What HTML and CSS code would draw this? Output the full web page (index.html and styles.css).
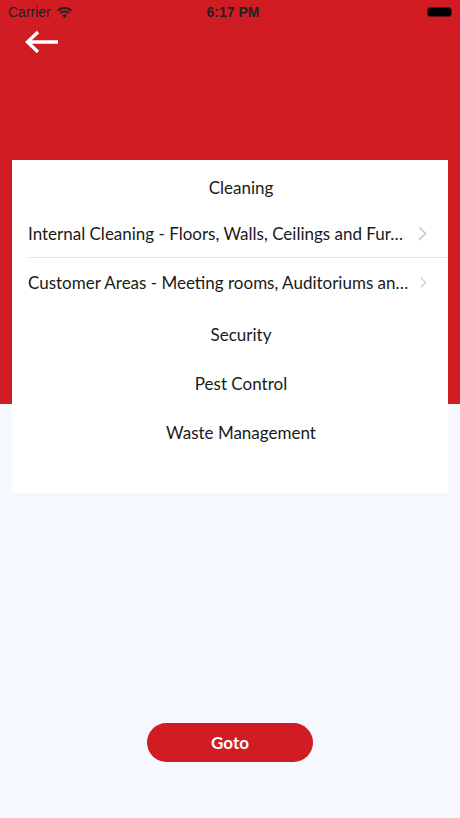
FILE: index.html
```html
<!DOCTYPE html>
<html>
<head>
  <title>Services</title>
  <link rel="stylesheet" href="styles.css">
</head>
<body>
  <div class="top">
    <div class="status-bar">
      <div class="carrier">
        Carrier
        <svg class="wifi" width="15" height="11" viewBox="0 0 15 11">
          <path d="M7.5 0C4.6 0 2 1.1 0 2.9l1.4 1.5C3 2.9 5.2 2 7.5 2s4.5.9 6.1 2.4L15 2.9C13 1.1 10.4 0 7.5 0z" fill="#222"/>
          <path d="M7.5 3.6c-1.9 0-3.6.7-4.9 1.9L4 7c.9-.9 2.1-1.4 3.5-1.4S10.1 6.1 11 7l1.4-1.5C11.1 4.3 9.4 3.6 7.5 3.6z" fill="#222"/>
          <path d="M7.5 7.2c-.9 0-1.8.4-2.4 1L7.5 11l2.4-2.8c-.6-.6-1.5-1-2.4-1z" fill="#222"/>
        </svg>
      </div>
      <div class="time">6:17 PM</div>
      <div class="battery"><span></span></div>
    </div>
    <div class="nav">
      <svg class="back" width="36" height="24" viewBox="0 0 36 24">
        <path d="M34 12H4M14 2L3.5 12 14 22" fill="none" stroke="#fff" stroke-width="3.4"/>
      </svg>
    </div>
  </div>

  <div class="content">
    <div class="card">
      <div class="item first">Cleaning</div>
      <div class="row">
        <span class="row-text">Internal Cleaning - Floors, Walls, Ceilings and Fur…</span>
        <svg class="chevron" width="9" height="15" viewBox="0 0 9 15">
          <path d="M1 1l6.5 6.5L1 14" fill="none" stroke="#c7c7cc" stroke-width="1.6"/>
        </svg>
      </div>
      <div class="row last">
        <span class="row-text">Customer Areas - Meeting rooms, Auditoriums an…</span>
        <svg class="chevron" width="9" height="15" viewBox="0 0 9 15">
          <path d="M1 1l6.5 6.5L1 14" fill="none" stroke="#c7c7cc" stroke-width="1.6"/>
        </svg>
      </div>
      <div class="item spaced">Security</div>
      <div class="item">Pest Control</div>
      <div class="item">Waste Management</div>
    </div>
  </div>

  <div class="footer">
    <button class="goto">Goto</button>
  </div>
</body>
</html>
```

FILE: styles.css
```css
/* page */
body {
  margin: 0;
  padding: 0;
  width: 460px;
  height: 818px;
  overflow: hidden;
  font-family: Lato, sans-serif;
  background-color: #f5f8fe;
  color: #1a1a1a;
  position: relative;
}

.top {
  background-color: #d21c24;
  height: 404px;
}

.status-bar {
  height: 24px;
  display: flex;
  align-items: center;
  justify-content: space-between;
  padding: 0 8px;
  font-family: "Liberation Sans", Arial, sans-serif;
  font-size: 14px;
  color: #222;
}

.carrier {
  display: flex;
  align-items: center;
  gap: 6px;
  width: 120px;
}

.time {
  font-weight: bold;
  font-size: 14px;
  margin-left: 6px;
}

.battery {
  width: 120px;
  display: flex;
  justify-content: flex-end;
}

.battery span {
  width: 23px;
  height: 8px;
  background-color: #000;
  border: 1.5px solid #6a1216;
  border-radius: 3px;
}

.nav {
  height: 36px;
  padding-left: 24px;
  display: flex;
  align-items: center;
}

.back {
  display: block;
}

.content {
  position: absolute;
  top: 160px;
  left: 12px;
  right: 12px;
}

.card {
  background-color: #fff;
  height: 333px;
  padding-top: 4px;
  box-sizing: border-box;
}

.item {
  box-sizing: border-box;
  height: 49px;
  padding-top: 1px;
  line-height: 48px;
  padding-left: 22px;
  text-align: center;
  font-size: 17px;
  white-space: nowrap;
}

.item.first {
  height: 45px;
  padding-top: 2px;
  line-height: 43px;
}

.item.spaced {
  margin-top: 4px;
}

.row {
  height: 48px;
  display: flex;
  align-items: center;
  margin-left: 16px;
  padding-right: 21px;
  border-bottom: 1px solid #e3e3e6;
}

.row.last {
  border-bottom: none;
}

.row-text {
  flex: 1;
  white-space: nowrap;
  font-size: 17px;
  margin-right: 12px;
}

.chevron {
  display: block;
}

.footer {
  position: absolute;
  top: 723px;
  left: 0;
  right: 0;
  display: flex;
  justify-content: center;
}

.goto {
  width: 166px;
  height: 39px;
  border: none;
  border-radius: 20px;
  background-color: #d21c24;
  color: #fff;
  font-family: Lato, sans-serif;
  font-weight: bold;
  font-size: 17px;
  cursor: pointer;
}
```
